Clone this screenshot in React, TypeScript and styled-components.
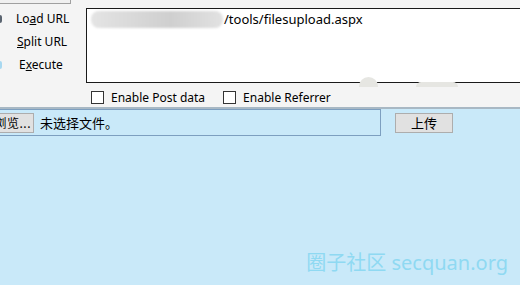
import React from "react";
import styled, { createGlobalStyle } from "styled-components";

const Global = createGlobalStyle`
  html, body { margin: 0; padding: 0; }
  body {
    width: 520px;
    height: 285px;
    overflow: hidden;
    font-family: "Noto Sans", "Noto Sans CJK SC", sans-serif;
    font-size: 12px;
    color: #000;
  }
`;

const Page = styled.div`
  position: relative;
  width: 520px;
  height: 285px;
  display: flex;
  flex-direction: column;
  background: #c9e9f9;
`;

const Toolbar = styled.div`
  position: relative;
  height: 107px;
  background: #f4f4f4;
  border-bottom: 2px solid #a8b8c4;
  display: flex;
`;

const Side = styled.div`
  width: 86px;
  display: flex;
  flex-direction: column;
`;

const TopBox = styled.div`
  width: 70px;
  height: 3px;
  border-bottom: 1px solid #a0a0a0;
  border-right: 1px solid #a0a0a0;
  background: #f0f0f0;
`;

const Actions = styled.div`
  display: flex;
  flex-direction: column;
  padding-top: 5px;
  gap: 4px;
`;

const Action = styled.div<{ $indent: number }>`
  position: relative;
  height: 19px;
  line-height: 19px;
  padding-left: ${(p) => p.$indent}px;
  white-space: nowrap;
`;

const Glyph = styled.span<{ $color: string }>`
  position: absolute;
  left: -4px;
  top: 6px;
  width: 6px;
  height: 8px;
  border-radius: 2px;
  background: ${(p) => p.$color};
`;

const Key = styled.span`
  text-decoration: underline;
  text-underline-offset: 1px;
`;

const Main = styled.div`
  flex: 1;
  display: flex;
  flex-direction: column;
  padding-top: 8px;
`;

const Editor = styled.div`
  height: 71px;
  border: 1px solid #1a1a1a;
  border-right: none;
  background: #fff;
  padding: 2px 0 0 3px;
  display: flex;
  align-items: flex-start;
`;

const Redacted = styled.span`
  display: inline-block;
  width: 132px;
  height: 17px;
  margin-left: 1px;
  border-radius: 8px;
  background: linear-gradient(90deg, #e4e4e4 0%, #d6d6d6 40%, #cfcfcf 60%, #e2e2e2 100%);
  filter: blur(1.2px);
`;

const UrlText = styled.span`
  font-size: 13px;
  line-height: 17px;
  margin-left: 1px;
`;

const Options = styled.div`
  display: flex;
  align-items: center;
  gap: 18px;
  padding: 6px 0 0 5px;
`;

const Check = styled.label`
  display: flex;
  align-items: center;
  gap: 7px;
  font-size: 12px;
`;

const Box = styled.span`
  width: 11px;
  height: 11px;
  border: 1px solid #333;
  background: #fff;
`;

const Smudge = styled.span<{ $x: number; $w: number; $h: number }>`
  position: absolute;
  left: ${(p) => p.$x}px;
  top: ${(p) => 87 - p.$h}px;
  width: ${(p) => p.$w}px;
  height: ${(p) => p.$h}px;
  border-radius: ${(p) => p.$h}px ${(p) => p.$h}px 0 0;
  background: #e6e6e2;
`;

const FormRow = styled.div`
  display: flex;
  align-items: center;
`;

const FileField = styled.div`
  width: 381px;
  height: 25px;
  margin-left: -1px;
  border: 1px solid #7d9fc0;
  border-left: none;
  display: flex;
  align-items: center;
  gap: 6px;
`;

const Button = styled.button`
  height: 20px;
  padding: 0 8px;
  border: 1px solid #adadad;
  background: #e1e1e1;
  font-family: "Noto Sans CJK SC", sans-serif;
  font-size: 12px;
  color: #000;
  line-height: 18px;
`;

const Browse = styled(Button)`
  margin-left: -22px;
  width: 57px;
  text-align: right;
  padding: 0 2px 0 0;
  white-space: nowrap;
  letter-spacing: 0.5px;
`;

const Upload = styled(Button)`
  margin-left: 14px;
  width: 58px;
  font-size: 13px;
`;

const FileName = styled.span`
  font-family: "Noto Sans CJK SC", sans-serif;
  font-size: 13px;
`;

const Watermark = styled.div`
  position: absolute;
  right: 12px;
  bottom: 9px;
  font-size: 20px;
  color: #8fd9f2;
  font-family: "Noto Sans", "Noto Sans CJK SC", sans-serif;
  white-space: nowrap;
`;

export default function App() {
  return (
    <>
      <Global />
      <Page>
        <Toolbar>
          <Side>
            <TopBox />
            <Actions>
              <Action $indent={16}>
                <Glyph $color="#5a6470" />
                Lo<Key>a</Key>d URL
              </Action>
              <Action $indent={17}>
                <Key>S</Key>plit URL
              </Action>
              <Action $indent={19}>
                <Glyph $color="#a8d8f0" />
                E<Key>x</Key>ecute
              </Action>
            </Actions>
          </Side>
          <Main>
            <Editor>
              <Redacted />
              <UrlText>/tools/filesupload.aspx</UrlText>
            </Editor>
            <Options>
              <Check>
                <Box />
                Enable Post data
              </Check>
              <Check>
                <Box />
                Enable Referrer
              </Check>
            </Options>
          </Main>
          <Smudge $x={359} $w={19} $h={10} />
          <Smudge $x={416} $w={42} $h={5} />
        </Toolbar>
        <FormRow>
          <FileField>
            <Browse>浏览...</Browse>
            <FileName>未选择文件。</FileName>
          </FileField>
          <Upload>上传</Upload>
        </FormRow>
        <Watermark>圈子社区 secquan.org</Watermark>
      </Page>
    </>
  );
}
